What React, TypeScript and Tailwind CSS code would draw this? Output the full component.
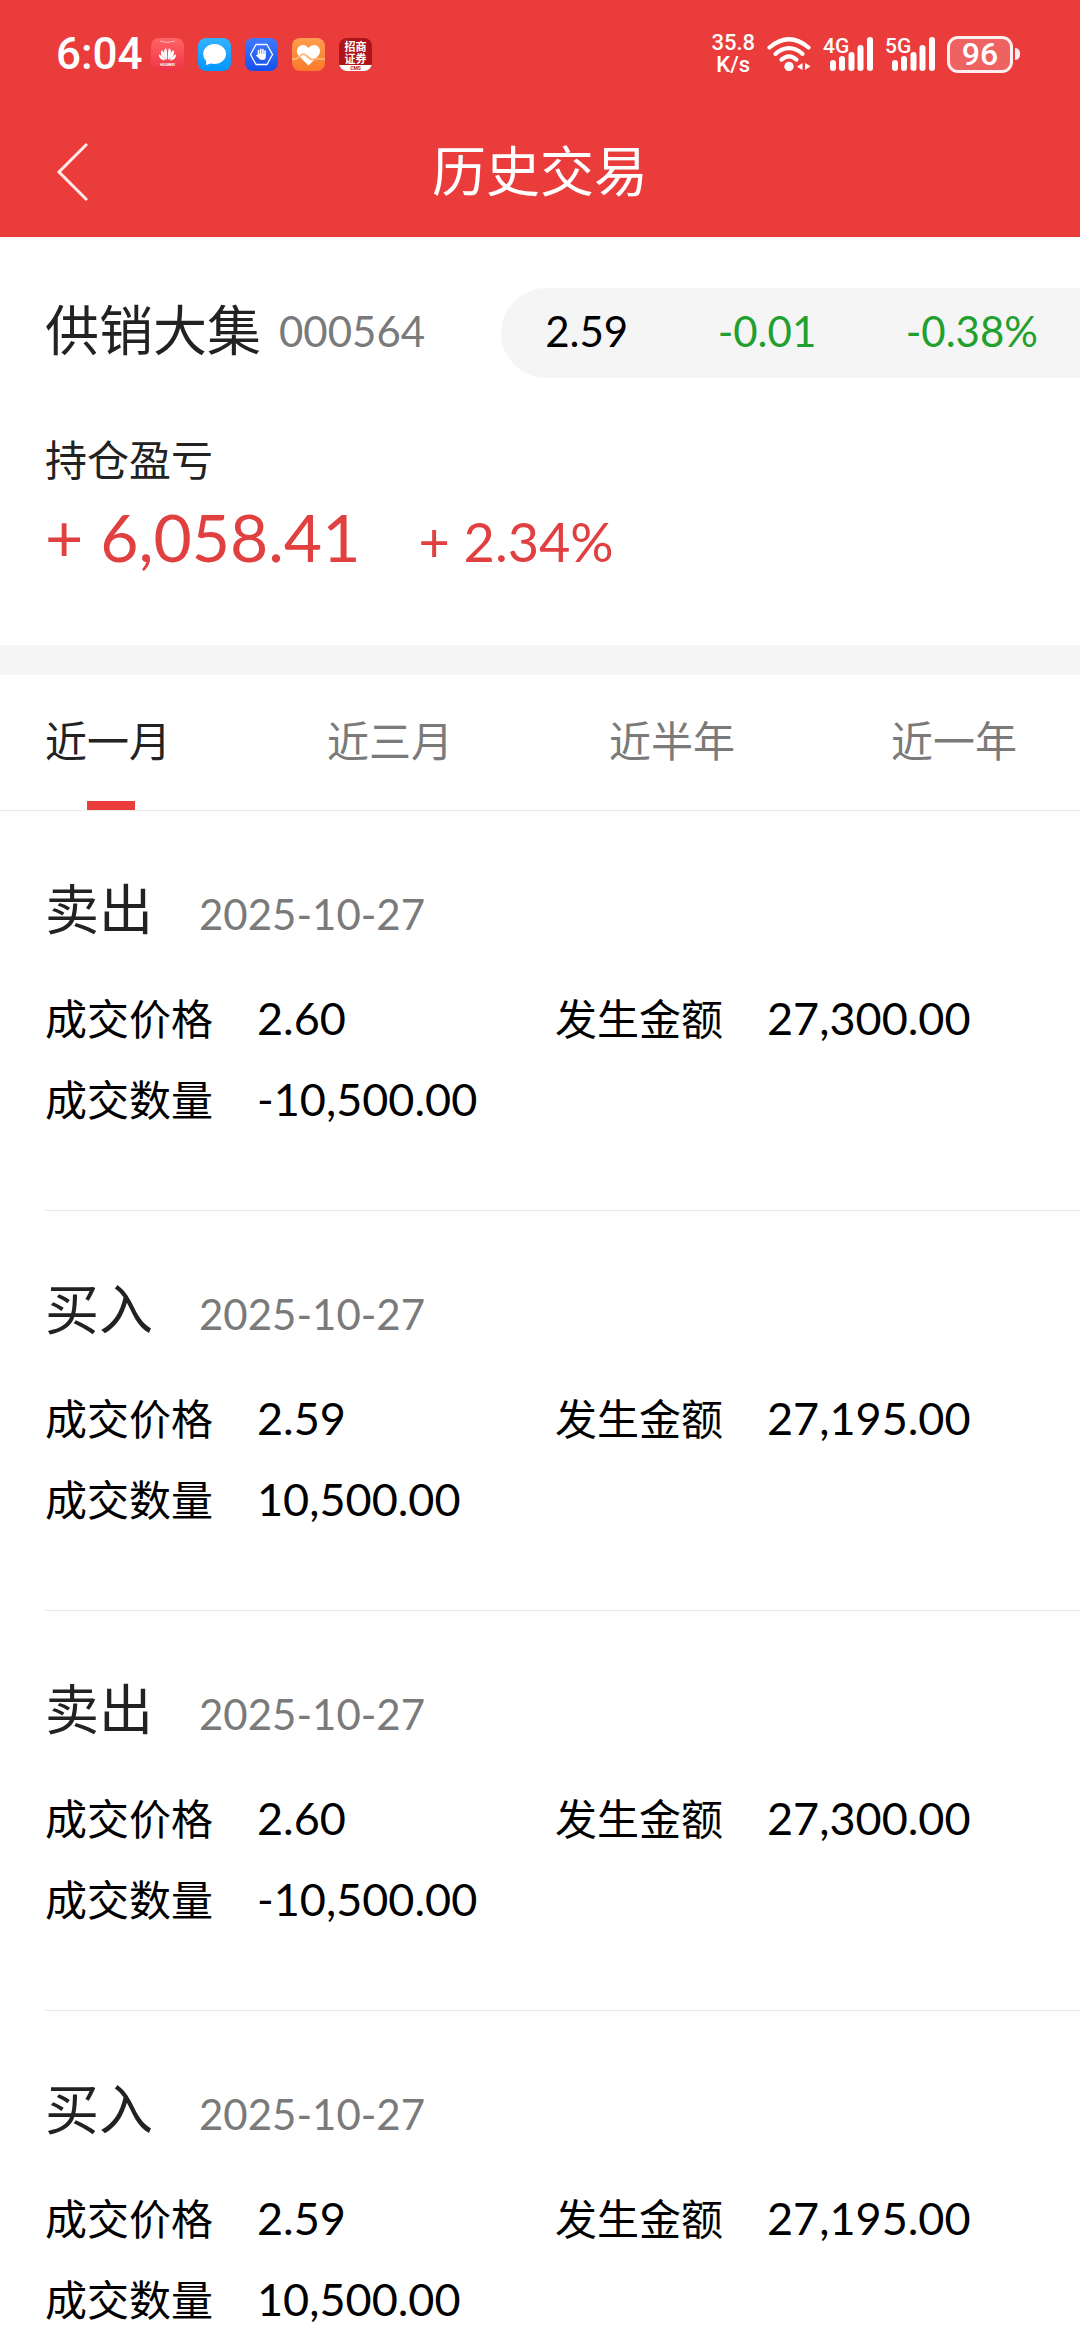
import React, { useState } from 'react';

type Trade = {
  side: '卖出' | '买入';
  date: string;
  price: string;
  amount: string;
  quantity: string;
};

const PERIODS = ['近一月', '近三月', '近半年', '近一年'];

const TRADES: Trade[] = [
  { side: '卖出', date: '2025-10-27', price: '2.60', amount: '27,300.00', quantity: '-10,500.00' },
  { side: '买入', date: '2025-10-27', price: '2.59', amount: '27,195.00', quantity: '10,500.00' },
  { side: '卖出', date: '2025-10-27', price: '2.60', amount: '27,300.00', quantity: '-10,500.00' },
  { side: '买入', date: '2025-10-27', price: '2.59', amount: '27,195.00', quantity: '10,500.00' },
];

function HuaweiIcon() {
  return (
    <svg viewBox="0 0 33 33" className="size-[33px]">
      <defs>
        <linearGradient id="hw" x1="0" y1="0" x2="0" y2="1">
          <stop offset="0" stopColor="#ff6466" />
          <stop offset="1" stopColor="#ee3346" />
        </linearGradient>
      </defs>
      <rect width="33" height="33" rx="8" fill="url(#hw)" />
      <path d="M9 3 Q16.500 6 24 3" fill="none" stroke="#ffb9b4" strokeWidth="1" />
      <g fill="#fff">
        <path d="M16 22 C12.500 17 12 12 15 10 C16.200 13 16.300 18 16 22Z" />
        <path d="M17 22 C20.500 17 21 12 18 10 C16.800 13 16.700 18 17 22Z" />
        <path d="M15 22 C10.500 19 8.800 15 10.800 12 C13 14 14.500 18 15 22Z" />
        <path d="M18 22 C22.500 19 24.200 15 22.200 12 C20 14 18.500 18 18 22Z" />
        <path d="M14 22.500 C10 22 7.500 19.500 8 16.200 C11 17.500 13 20 14 22.500Z" />
        <path d="M19 22.500 C23 22 25.500 19.500 25 16.200 C22 17.500 20 20 19 22.500Z" />
      </g>
      <text x="16.500" y="28" textAnchor="middle" fontSize="4" fontWeight="700" fill="#fff" fontFamily="Roboto, sans-serif">HUAWEI</text>
    </svg>
  );
}

function MessageIcon() {
  return (
    <svg viewBox="0 0 33 33" className="size-[33px]">
      <defs>
        <linearGradient id="msg" x1="0" y1="0" x2="0" y2="1">
          <stop offset="0" stopColor="#35b2ff" />
          <stop offset="1" stopColor="#0096ff" />
        </linearGradient>
      </defs>
      <rect width="33" height="33" rx="8" fill="url(#msg)" />
      <path d="M16.500 6 C23 6 28 10.500 28 16 C28 21.500 23 26 16.500 26 C15 26 14 25.900 12.800 25.600 L8 27 L8.200 23 C6.200 21.200 5.200 18.800 5.200 16 C5.200 10.500 10 6 16.500 6Z" fill="#fff" />
    </svg>
  );
}

function BlockIcon() {
  return (
    <svg viewBox="0 0 33 33" className="size-[33px]">
      <defs>
        <linearGradient id="blk" x1="0" y1="0" x2="0" y2="1">
          <stop offset="0" stopColor="#3f7bff" />
          <stop offset="1" stopColor="#1550ec" />
        </linearGradient>
      </defs>
      <rect width="33" height="33" rx="8" fill="url(#blk)" />
      <path d="M11 6.500 H22 L27.500 16.500 L22 26.500 H11 L5.500 16.500Z" fill="none" stroke="#fff" strokeWidth="1.300" strokeLinejoin="round" />
      <path d="M13.500 17 V12.500 M15.700 16 V11.200 M17.900 16 V11.600 M20 17 V13" stroke="#fff" strokeWidth="1.600" strokeLinecap="round" />
      <path d="M12.700 16 H20.800 V18.500 Q20.800 22 17.500 22 Q14.800 22 13.500 20 L11 17.500 Q11.400 16.300 12.700 17.300Z" fill="#fff" />
    </svg>
  );
}

function HealthIcon() {
  return (
    <svg viewBox="0 0 33 33" className="size-[33px]">
      <defs>
        <linearGradient id="hlt" x1="0" y1="0" x2="0" y2="1">
          <stop offset="0" stopColor="#ff9d4e" />
          <stop offset="1" stopColor="#fb7a2a" />
        </linearGradient>
      </defs>
      <rect width="33" height="33" rx="8" fill="url(#hlt)" />
      <path d="M16.500 27.500 L7 18 C4 14.500 4.500 10.500 7.200 8.500 C10 6.200 14 6.800 16.500 10 C19 6.800 23 6.200 25.800 8.500 C28.500 10.500 29 14.500 26 18Z" fill="#fff" />
      <path d="M0 21 H3 Q5.500 21 7.500 18.500 Q10.500 14.800 13.500 17 L18 20.800 Q20.500 22.500 23 20.800 H33" fill="none" stroke="#ffb27a" strokeWidth="1.800" />
    </svg>
  );
}

function BrokerIcon() {
  return (
    <svg viewBox="0 0 33 33" className="size-[33px]">
      <defs>
        <clipPath id="brk">
          <rect width="33" height="33" rx="8" />
        </clipPath>
      </defs>
      <g clipPath="url(#brk)">
        <rect width="33" height="33" fill="#ae1519" />
        <rect y="27" width="33" height="6" fill="#fff" />
      </g>
      <text fill="#fff" fontSize="11" fontWeight="700" textAnchor="middle" fontFamily="'Noto Sans CJK SC', sans-serif">
        <tspan x="16.500" y="12.500">招商</tspan>
        <tspan x="16.500" y="24.500">证券</tspan>
      </text>
      <text x="16.500" y="31.500" textAnchor="middle" fontSize="5" fontWeight="700" fill="#ae1519" fontFamily="Roboto, sans-serif">CMS</text>
    </svg>
  );
}

function WifiIcon() {
  return (
    <svg viewBox="0 0 44 34" className="h-[34px] w-[44px]">
      <g fill="none" stroke="#fff" strokeWidth="4.200" strokeLinecap="round">
        <path d="M2.500 10.500 Q22 -6 41.500 10.500" />
        <path d="M8.500 16.800 Q22 5.500 35.500 16.800" />
        <path d="M14.500 22.600 Q22 16.200 29.500 22.600" />
      </g>
      <circle cx="22" cy="29.500" r="4.700" fill="#fff" />
      <path d="M35.500 26 V33 L30 29.800Z M38 26 V33 L43.500 29.200Z" fill="#fff" />
    </svg>
  );
}

function SignalIcon({ label }: { label: string }) {
  return (
    <svg viewBox="0 0 50 34" className="h-[34px] w-[50px] overflow-visible" fill="#fff">
      <rect x="7" y="23" width="6" height="11" rx="3" />
      <rect x="16" y="19" width="6" height="15" rx="3" />
      <rect x="25.500" y="15" width="6" height="19" rx="3" />
      <rect x="34.500" y="8" width="6" height="26" rx="3" />
      <rect x="44" y="0" width="6" height="34" rx="3" />
      <text x="0" y="16" fontSize="21" fontWeight="500" fontFamily="Roboto, sans-serif">{label}</text>
    </svg>
  );
}

function StatusBar() {
  return (
    <div className="flex h-[108px] items-center justify-between pl-14 pr-[60px] font-['Roboto',sans-serif] font-medium text-white">
      <div className="flex items-center gap-2">
        <span className="text-[44px] leading-[50px]">6:04</span>
        <div className="flex gap-[14px]">
          <HuaweiIcon />
          <MessageIcon />
          <BlockIcon />
          <HealthIcon />
          <BrokerIcon />
        </div>
      </div>
      <div className="flex items-center gap-3">
        <div className="text-center text-[22px] leading-[22px]">
          <div>35.8</div>
          <div>K/s</div>
        </div>
        <WifiIcon />
        <SignalIcon label="4G" />
        <SignalIcon label="5G" />
        <div className="flex items-center gap-[2px]">
          <div className="flex h-[37px] w-[66px] items-center justify-center rounded-[11px] border-[3px] border-white/90 bg-white/20 text-[32px] leading-none">
            96
          </div>
          <div className="h-3 w-[5px] rounded-r-full bg-white/90" />
        </div>
      </div>
    </div>
  );
}

function Field({ label, value }: { label: string; value: string }) {
  return (
    <div className="flex items-baseline gap-11 leading-[50px] text-black">
      <dt className="text-[42px]">{label}</dt>
      <dd className="text-[45px]">{value}</dd>
    </div>
  );
}

function TradeItem({ trade }: { trade: Trade }) {
  return (
    <li className="ml-[45px] border-b border-[#e9e9e9] pt-[63px] pb-[85px]">
      <div className="flex items-baseline gap-[46px] leading-[72px]">
        <h2 className="text-[54px] text-[#222]">{trade.side}</h2>
        <time className="text-[42px] text-[#7a7a7a]">{trade.date}</time>
      </div>
      <dl className="mt-[43px] grid grid-cols-[510px_1fr] gap-y-[30px]">
        <Field label="成交价格" value={trade.price} />
        <Field label="发生金额" value={trade.amount} />
        <Field label="成交数量" value={trade.quantity} />
      </dl>
    </li>
  );
}

export default function App() {
  const [period, setPeriod] = useState(PERIODS[0]);

  return (
    <div lang="zh-CN" className="flex h-screen flex-col bg-white font-['Lato','Noto_Sans_CJK_SC',sans-serif] text-[#222]">
      <header className="shrink-0 bg-[#ea3c3b] text-white">
        <StatusBar />
        <div className="grid h-[129px] grid-cols-[1fr_auto_1fr] items-center pb-[2px]">
          <button type="button" aria-label="返回" className="ml-14 w-8">
            <svg viewBox="0 0 32 58" className="h-[58px] w-8" fill="none" stroke="#ffe9e9" strokeWidth="3">
              <path d="M31 1 L3 29 L31 57" />
            </svg>
          </button>
          <h1 className="text-[54px] leading-[72px]">历史交易</h1>
        </div>
      </header>

      <main className="flex-1 overflow-y-auto [scrollbar-width:none]">
        {/* Stock and profit summary */}
        <section className="border-b-[30px] border-[#f5f5f5] pt-[51px] pb-[51px]">
          <div className="flex items-center pl-[45px]">
            <span className="pb-1 text-[54px] leading-[72px]">供销大集</span>
            <span className="ml-[18px] pb-1 text-[42px] leading-[50px] text-[#7a7a7a]">000564</span>
            <div className="ml-[76px] flex h-[90px] flex-1 items-center justify-between rounded-l-full bg-[#f5f5f5] pr-[42px] pb-1 pl-11 text-[42px] leading-[50px] text-[#22a02f]">
              <span className="text-black">2.59</span>
              <span>-0.01</span>
              <span>-0.38%</span>
            </div>
          </div>
          <div className="px-[45px]">
            <p className="mt-[57px] text-[42px] leading-[50px]">持仓盈亏</p>
            <p className="flex items-baseline gap-[58px] leading-[104px] text-[#e04040]">
              <span className="text-[66px]">+ 6,058.41</span>
              <span className="text-[54px]">+ 2.34%</span>
            </p>
          </div>
        </section>

        <nav className="flex justify-between border-b border-[#e9e9e9] pr-[57px] pl-[45px]">
          {PERIODS.map((item) => (
            <button
              key={item}
              type="button"
              onClick={() => setPeriod(item)}
              className={`flex w-[132px] flex-col pt-[41px] text-left text-[42px] leading-[50px] whitespace-nowrap ${item === period ? 'text-[#222]' : 'text-[#7a7a7a]'}`}
            >
              {item}
              <span className={`mt-[35px] h-[9px] w-12 self-center ${item === period ? 'bg-[#ea3c3b]' : 'bg-transparent'}`} />
            </button>
          ))}
        </nav>

        <ul>
          {TRADES.map((trade, i) => (
            <TradeItem key={i} trade={trade} />
          ))}
        </ul>
      </main>
    </div>
  );
}
